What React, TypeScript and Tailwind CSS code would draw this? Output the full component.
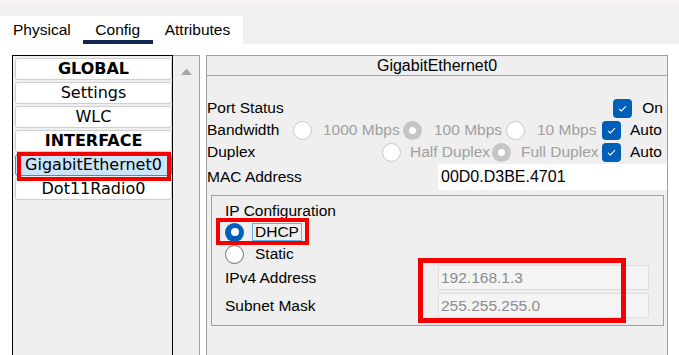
import type { ReactNode } from 'react'

type RadioState = 'off' | 'offDisabled' | 'onDisabled' | 'on'

function Radio({ state }: { state: RadioState }) {
  if (state === 'on') {
    return (
      <span className="flex h-[19px] w-[19px] shrink-0 items-center justify-center rounded-full bg-[#005fb8]">
        <span className="h-[8px] w-[8px] rounded-full bg-white" />
      </span>
    )
  }
  if (state === 'onDisabled') {
    return (
      <span className="flex h-[19px] w-[19px] shrink-0 items-center justify-center rounded-full bg-[#c5c5c5]">
        <span className="h-[7px] w-[7px] rounded-full bg-white" />
      </span>
    )
  }
  return (
    <span
      className={
        state === 'off'
          ? 'h-[19px] w-[19px] shrink-0 rounded-full border border-[#6f6f6f] bg-white'
          : 'h-[19px] w-[19px] shrink-0 rounded-full border border-[#c8c8c8] bg-white'
      }
    />
  )
}

function Check() {
  return (
    <span className="flex h-[19px] w-[19px] shrink-0 items-center justify-center rounded-[4px] bg-[#005fb8]">
      <svg width="19" height="19" viewBox="0 0 19 19">
        <polyline points="6,9.8 8.4,12 13,7.2" fill="none" stroke="white" strokeWidth="1.1" />
      </svg>
    </span>
  )
}

// 单选项：圆点 + 灰色文字
function Option({ w, state, gap, children }: { w: string; state: RadioState; gap: string; children: ReactNode }) {
  return (
    <div className={`flex shrink-0 items-center ${w}`}>
      <Radio state={state} />
      <span className={`${gap} text-[#a0a0a0]`}>{children}</span>
    </div>
  )
}

function NavItem({ label, bold, selected }: { label: string; bold?: boolean; selected?: boolean }) {
  return (
    <div
      className={
        selected
          ? 'flex h-[22px] w-[157px] items-center justify-center rounded-[3px] border border-[#3c8ad8] bg-[#cce4f7]'
          : 'flex h-[22px] w-[157px] items-center justify-center rounded-[3px] border border-[#cfcfcf] bg-white'
      }
    >
      <span className={bold ? 'font-bold' : ''}>{label}</span>
    </div>
  )
}

export default function App() {
  return (
    <div className="flex h-[355px] w-[679px] flex-col overflow-hidden bg-[#f0f0f0] font-['Liberation_Sans',Arial,sans-serif] text-[15.5px] text-black">
      <div className="h-[5px] shrink-0 bg-[#f9f2f5]" />
      <div className="h-[11px] shrink-0" />

      {/* 标签页 */}
      <div className="flex h-[28px] shrink-0">
        <div className="flex h-full w-[243px] bg-white pl-[13px]">
          <div className="flex h-full items-center border-b-[4px] border-transparent pt-[4px]">Physical</div>
          <div className="ml-[12px] flex h-full w-[70px] items-center justify-center border-b-[4px] border-[#0e2a4f] pt-[4px]">
            Config
          </div>
          <div className="ml-[12px] flex h-full items-center border-b-[4px] border-transparent pt-[4px]">Attributes</div>
        </div>
      </div>

      {/* 内容 */}
      <div className="flex min-h-0 flex-1 bg-white pl-[12px] pt-[11px]">
        {/* 左侧列表 */}
        <div className="relative w-[161px] shrink-0 border border-b-0 border-black bg-[#efefef] pl-[2px] pt-[2px] font-['DejaVu_Sans',sans-serif] text-[16px]">
          <div className="flex flex-col gap-[2px]">
            <NavItem label="GLOBAL" bold />
            <NavItem label="Settings" />
            <NavItem label="WLC" />
            <NavItem label="INTERFACE" bold />
            <NavItem label="GigabitEthernet0" selected />
            <NavItem label="Dot11Radio0" />
          </div>
          <span className="absolute left-[4px] top-[96px] h-[29px] w-[154px] border-[4px] border-[#f40000]" />
        </div>

        {/* 滚动条 */}
        <div className="flex w-[27px] shrink-0 justify-center border-r border-t border-[#a0a0a0] bg-[#efefef] pt-[12px]">
          <svg width="11" height="7" viewBox="0 0 11 7">
            <polygon points="0,7 11,7 5.5,0.5" fill="#a6a6a6" />
          </svg>
        </div>

        <div className="w-[6px] shrink-0" />

        {/* 右侧面板 */}
        <div className="flex w-[462px] shrink-0 flex-col border border-b-0 border-[#a0a0a0] bg-[#efefef]">
          <div className="flex h-[20px] shrink-0 items-center justify-center border-b border-[#a0a0a0] text-[16px]">
            GigabitEthernet0
          </div>

          <div className="pt-[21px]">
            <div className="flex h-[22px] items-center justify-between pr-[4px]">
              <span>Port Status</span>
              <div className="flex items-center">
                <Check />
                <span className="ml-[10px]">On</span>
              </div>
            </div>

            <div className="flex h-[22px] items-center">
              <span className="w-[86px] shrink-0">Bandwidth</span>
              <Option w="w-[110px]" state="offDisabled" gap="ml-[11px]">1000 Mbps</Option>
              <Option w="w-[103px]" state="onDisabled" gap="ml-[12px]">100 Mbps</Option>
              <Option w="w-[96px]" state="offDisabled" gap="ml-[12px]">10 Mbps</Option>
              <Check />
              <span className="ml-[9px]">Auto</span>
            </div>

            <div className="flex h-[22px] items-center">
              <span className="w-[175px] shrink-0">Duplex</span>
              <Option w="w-[110px]" state="offDisabled" gap="ml-[9px]">Half Duplex</Option>
              <Option w="w-[110px]" state="onDisabled" gap="ml-[10px]">Full Duplex</Option>
              <Check />
              <span className="ml-[9px]">Auto</span>
            </div>

            <div className="flex h-[28px] items-center">
              <span className="w-[231px] shrink-0">MAC Address</span>
              <div className="flex h-[26px] w-[229px] items-center bg-white pl-[3px] text-[16px]">00D0.D3BE.4701</div>
            </div>

            {/* IP 配置 */}
            <div className="relative ml-[4px] mt-[4px] w-[453px] border border-[#a0a0a0] pb-[7px] pl-[13px] pt-[5px]">
              <div className="flex h-[20px] items-center">IP Configuration</div>
              <div className="flex h-[22px] items-center">
                <Radio state="on" />
                <span className="ml-[8px] flex h-[18px] items-center border border-[#5bb4ea] px-[2px]">DHCP</span>
              </div>
              <div className="flex h-[22px] items-center">
                <Radio state="off" />
                <span className="ml-[11px]">Static</span>
              </div>
              <div className="flex h-[25px] items-center">
                <span className="w-[213px] shrink-0">IPv4 Address</span>
                <div className="flex h-[25px] w-[211px] items-center border border-[#dedede] bg-[#f4f4f4] pl-[2px] text-[#8c8c8c]">
                  192.168.1.3
                </div>
              </div>
              <div className="mt-[3px] flex h-[25px] items-center">
                <span className="w-[213px] shrink-0">Subnet Mask</span>
                <div className="flex h-[25px] w-[211px] items-center border border-[#dedede] bg-[#f4f4f4] pl-[2px] text-[#8c8c8c]">
                  255.255.255.0
                </div>
              </div>

              <span className="absolute left-[4px] top-[22px] h-[27px] w-[93px] border-[4px] border-[#f40000]" />
              <span className="absolute left-[206px] top-[62px] h-[65px] w-[208px] border-[5px] border-[#f40000]" />
            </div>
          </div>
        </div>
      </div>
    </div>
  )
}
